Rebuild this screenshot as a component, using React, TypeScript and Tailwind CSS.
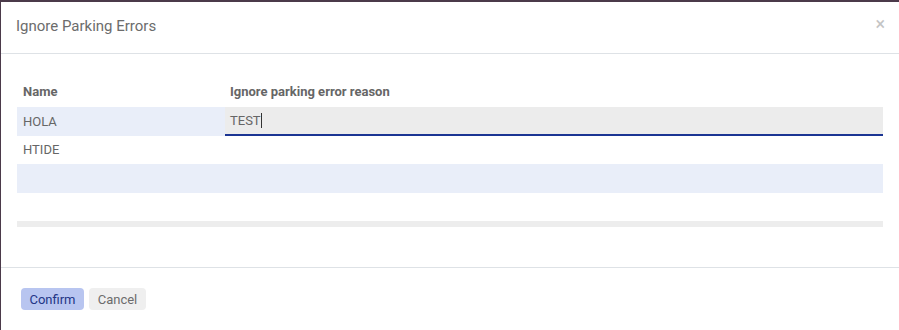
import React from "react";

export default function App() {
  return (
    <div className="w-[899px] h-[330px] bg-[#4b3a4a] overflow-hidden" style={{ fontFamily: "Roboto, 'Noto Sans', sans-serif" }}>
      <div className="ml-[1px] mt-[2px] h-[328px] bg-white flex flex-col">
        <div className="h-[52px] shrink-0 flex items-center justify-between pl-[15px] pr-[14px] border-b border-[#dee2e6]">
          <div className="text-[15px] text-[#6c6c6c] leading-none -mt-[3px]">Ignore Parking Errors</div>
          <div className="text-[#c4c4c4] text-[18px] leading-none -mt-[7px]">×</div>
        </div>
        <div className="h-[214px] shrink-0 border-b border-[#dee2e6] px-[16px] pt-[25px]">
          <div className="flex h-[28px] items-center text-[13px] font-bold text-[#666] -mt-[1px]">
            <div className="w-[208px] pl-[6px]">Name</div>
            <div className="flex-1 pl-[5px]">Ignore parking error reason</div>
          </div>
          <div className="flex h-[29px] mt-[1px] text-[13px] text-[#666]">
            <div className="w-[208px] pl-[6px] bg-[#e9eef9] flex items-center">HOLA</div>
            <div className="flex-1 bg-[#ececec] border-b-2 border-[#1b3593] flex items-center pl-[5px]">
              <span>TEST</span>
              <span className="w-px h-[15px] bg-[#333]" />
            </div>
          </div>
          <div className="flex h-[28px] items-center text-[13px] text-[#666]">
            <div className="w-[208px] pl-[6px]">HTIDE</div>
          </div>
          <div className="h-[29px] bg-[#e9eef9]" />
          <div className="h-[28px]" />
          <div className="h-[6px] bg-[#ededed]" />
        </div>
        <div className="flex items-start gap-[5px] pl-[20px] pt-[20px]">
          <button className="h-[22px] w-[63px] rounded-[4px] bg-[#b8c5f0] text-[#233587] text-[13px] leading-none">Confirm</button>
          <button className="h-[22px] w-[57px] rounded-[4px] bg-[#efefef] text-[#6c6c6c] text-[13px] leading-none">Cancel</button>
        </div>
      </div>
    </div>
  );
}
